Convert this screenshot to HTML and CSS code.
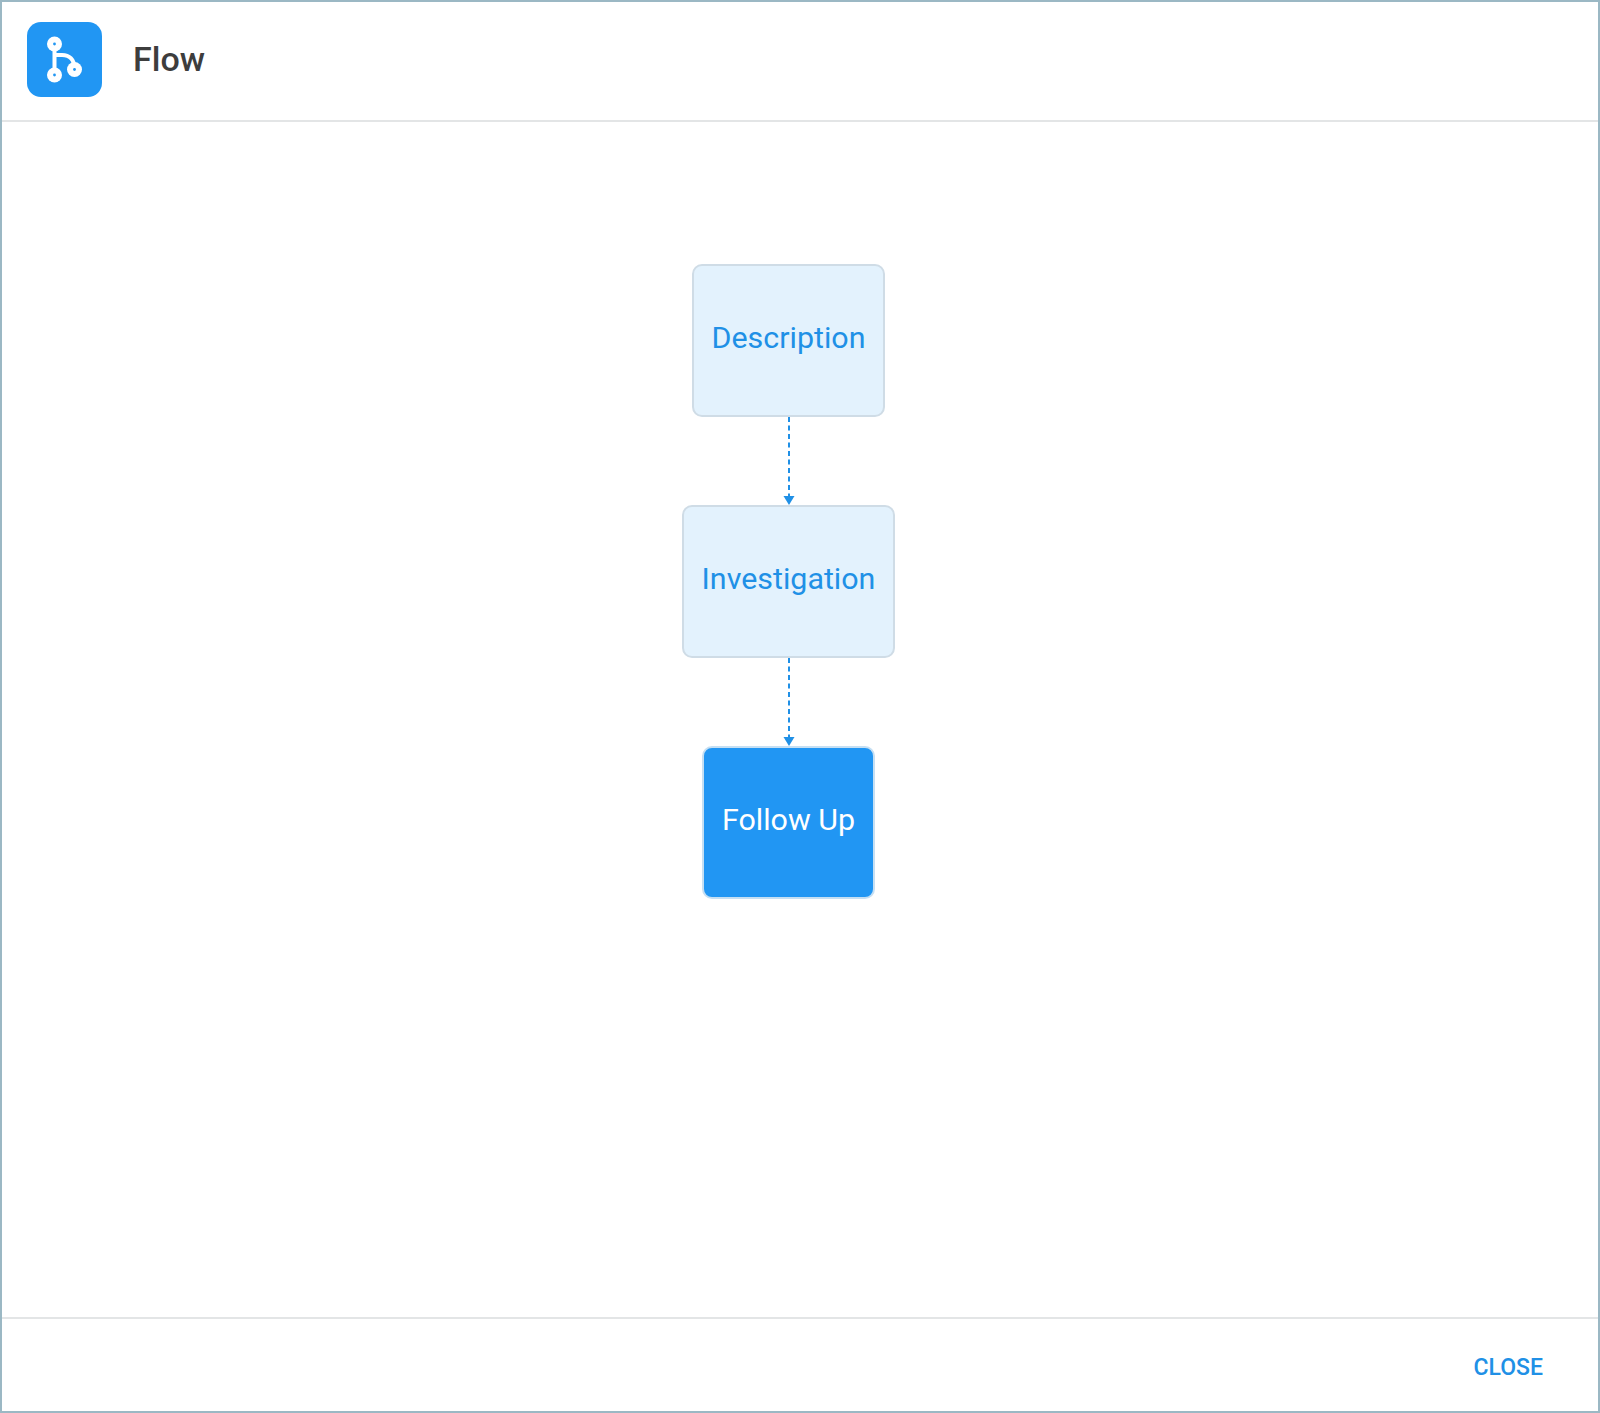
FILE: index.html
```html
<!DOCTYPE html>
<html lang="en">
<head>
<meta charset="utf-8">
<title>Flow</title>
<link rel="stylesheet" href="styles.css">
</head>
<body>
<div class="dialog">
  <header class="header">
    <div class="logo">
      <svg width="75" height="75" viewBox="0 0 75 75" fill="none">
        <path d="M27.5 22V53M27.5 33H35C42 33 47.5 37 47.5 47" stroke="#fff" stroke-width="4"/>
        <circle cx="27.5" cy="22" r="7.5" fill="#fff"/>
        <circle cx="27.5" cy="53" r="7.5" fill="#fff"/>
        <circle cx="47.5" cy="47.5" r="7.5" fill="#fff"/>
        <circle cx="27.5" cy="22" r="1.4" fill="#2196f3"/>
        <circle cx="27.5" cy="53" r="1.4" fill="#2196f3"/>
        <circle cx="47.5" cy="47.5" r="1.4" fill="#2196f3"/>
      </svg>
    </div>
    <h1 class="title">Flow</h1>
  </header>
  <main class="canvas">
    <div class="node node-light">Description</div>
    <svg class="link" width="12" height="88" viewBox="0 0 12 88">
      <line x1="6" y1="0" x2="6" y2="80" stroke="#2090e6" stroke-width="2" stroke-dasharray="5 3.5"/>
      <path d="M0.5 79H11.5L6 88Z" fill="#2090e6"/>
    </svg>
    <div class="node node-light">Investigation</div>
    <svg class="link" width="12" height="88" viewBox="0 0 12 88">
      <line x1="6" y1="0" x2="6" y2="80" stroke="#2090e6" stroke-width="2" stroke-dasharray="5 3.5"/>
      <path d="M0.5 79H11.5L6 88Z" fill="#2090e6"/>
    </svg>
    <div class="node node-solid">Follow Up</div>
  </main>
  <footer class="footer">
    <button class="close" type="button">CLOSE</button>
  </footer>
</div>
</body>
</html>
```
FILE: styles.css
```css
* { box-sizing: border-box; }
html, body { margin: 0; padding: 0; }
body {
  width: 1600px;
  height: 1413px;
  background: #fff;
  font-family: Roboto, "Liberation Sans", sans-serif;
}
.dialog {
  width: 1600px;
  height: 1413px;
  border: 2px solid #9bb8c4;
  display: flex;
  flex-direction: column;
  background: #fff;
}
.header {
  height: 120px;
  flex: none;
  border-bottom: 2px solid #e3e5e6;
  padding: 20px 0 0 25px;
  display: flex;
  align-items: flex-start;
  gap: 31px;
}
.logo {
  width: 75px;
  height: 75px;
  border-radius: 14px;
  background: #2196f3;
  display: flex;
}
.title {
  margin: 0;
  font-size: 34px;
  line-height: 75px;
  font-weight: 500;
  color: #3d3d3d;
}
.canvas {
  flex: 1;
  display: flex;
  flex-direction: column;
  align-items: center;
  padding-top: 142px;
  padding-right: 23px;
}
.node {
  height: 153px;
  padding: 0 18px 6px;
  border-radius: 10px;
  border: 2px solid;
  display: flex;
  align-items: center;
  justify-content: center;
  font-size: 30.4px;
}
.node-light {
  background: #e3f2fd;
  border-color: #cfdce6;
  color: #2090e6;
}
.node-solid {
  background: #2196f3;
  border-color: #c5dff3;
  color: #fff;
}
.link { display: block; flex: none; }
.footer {
  height: 94px;
  flex: none;
  border-top: 2px solid #e3e5e6;
  display: flex;
  justify-content: flex-end;
  align-items: center;
  padding: 4px 55px 0 0;
}
.close {
  border: 0;
  padding: 0;
  background: none;
  font: 500 23px Roboto, "Liberation Sans", sans-serif;
  color: #2090e6;
}
```
